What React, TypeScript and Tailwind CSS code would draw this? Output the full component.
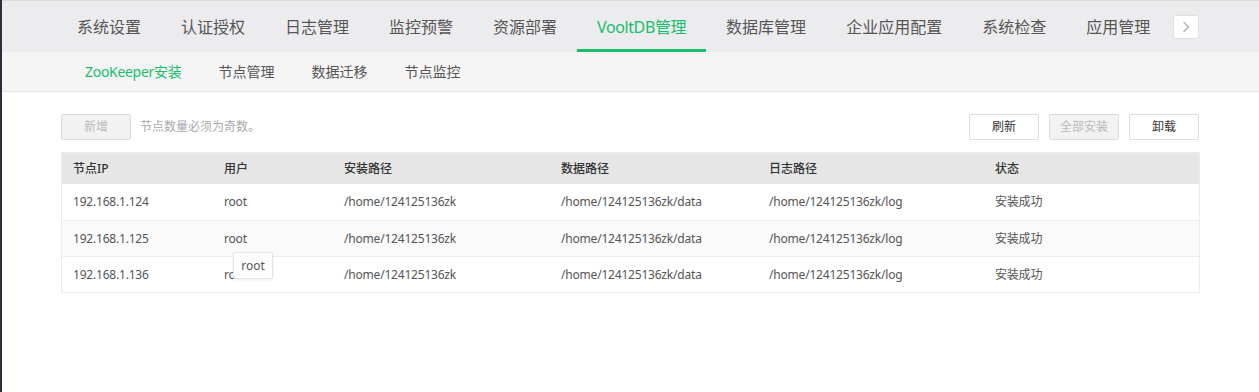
import React from 'react';

const font = { fontFamily: '"Noto Sans", "Noto Sans CJK SC", sans-serif' };

const tabs = ['系统设置', '认证授权', '日志管理', '监控预警', '资源部署', 'VooltDB管理', '数据库管理', '企业应用配置', '系统检查', '应用管理'];
const subTabs = ['ZooKeeper安装', '节点管理', '数据迁移', '节点监控'];

const rows = [
  { ip: '192.168.1.124', user: 'root' },
  { ip: '192.168.1.125', user: 'root' },
  { ip: '192.168.1.136', user: 'root' },
];

const cols = 'grid grid-cols-[151px_120px_217px_208px_226px_1fr]';

export default function App() {
  return (
    <div className="flex h-[392px] w-full bg-white" style={font}>
      <div className="w-[2px] shrink-0 bg-[#2b2f3b]" />
      <div className="flex min-w-0 flex-1 flex-col">
        {/* top nav */}
        <div className="flex h-[52px] items-stretch border-t border-[#d9d9d9] bg-[#ececee] pl-[55px]">
          {tabs.map((t, i) => (
            <div
              key={t}
              className={`relative flex items-center px-5 text-[16px] ${i === 5 ? 'tracking-[-0.4px] text-[#19be6b]' : 'text-[#555]'}`}
            >
              {t}
              {i === 5 && <div className="absolute bottom-0 left-0 right-0 h-[3px] bg-[#19be6b]" />}
            </div>
          ))}
          <div className="ml-[3px] flex items-center">
            <div className="flex h-[24px] w-[26px] items-center justify-center rounded-[3px] border border-[#e0e0e0] bg-white">
              <svg width="10" height="14" viewBox="0 0 10 14" fill="none">
                <path d="M2.5 2 L7.5 7 L2.5 12" stroke="#b5b5b5" strokeWidth="1.5" />
              </svg>
            </div>
          </div>
        </div>

        {/* sub nav */}
        <div className="flex h-[40px] items-center gap-[37px] border-b border-[#e4e4e4] bg-[#f5f5f5] pl-[83px] text-[14px]">
          {subTabs.map((t, i) => (
            <span key={t} className={i === 0 ? 'tracking-[-0.3px] text-[#19be6b]' : 'text-[#555]'}>
              {t}
            </span>
          ))}
        </div>

        {/* toolbar */}
        <div className="mt-[22px] flex items-center pl-[59px] pr-[60px]">
          <button className="h-[26px] w-[70px] rounded-[2px] border border-[#dcdcdc] bg-[#f2f2f2] text-[12px] text-[#bbb]">
            新增
          </button>
          <span className="ml-[9px] text-[12px] text-[#aaa]">节点数量必须为奇数。</span>
          <div className="ml-auto flex gap-[10px]">
            <button className="h-[26px] w-[70px] rounded-[2px] border border-[#dcdcdc] bg-white text-[12px] text-[#333]">
              刷新
            </button>
            <button className="h-[26px] w-[70px] rounded-[2px] border border-[#dcdcdc] bg-[#f2f2f2] text-[12px] text-[#bbb]">
              全部安装
            </button>
            <button className="h-[26px] w-[70px] rounded-[2px] border border-[#dcdcdc] bg-white text-[12px] text-[#333]">
              卸载
            </button>
          </div>
        </div>

        {/* table */}
        <div className="relative ml-[59px] mr-[59px] mt-[12px] border border-[#ebebeb] text-[12px]">
          <div className={`${cols} h-[31px] items-center bg-[#e6e6e6] font-medium text-[#333]`}>
            {['节点IP', '用户', '安装路径', '数据路径', '日志路径', '状态'].map((h) => (
              <div key={h} className="pl-[11px]">{h}</div>
            ))}
          </div>
          {rows.map((r, i) => (
            <div
              key={r.ip}
              className={`${cols} h-[36px] items-center tracking-[-0.2px] text-[#555] ${i > 0 ? 'border-t border-[#ededed]' : ''} ${i === 1 ? 'bg-[#fafafa]' : 'bg-white'}`}
            >
              <div className="pl-[11px]">{r.ip}</div>
              <div className="pl-[11px]">{r.user}</div>
              <div className="pl-[11px]">/home/124125136zk</div>
              <div className="pl-[11px]">/home/124125136zk/data</div>
              <div className="pl-[11px]">/home/124125136zk/log</div>
              <div className="pl-[11px]">安装成功</div>
            </div>
          ))}
          <div className="absolute left-[171px] top-[99px] flex h-[27px] w-[40px] items-center justify-center rounded-[2px] border border-[#e5e5e5] bg-white text-[12px] text-[#555] shadow-[0_1px_3px_rgba(0,0,0,0.08)]">
            root
          </div>
        </div>
      </div>
    </div>
  );
}
